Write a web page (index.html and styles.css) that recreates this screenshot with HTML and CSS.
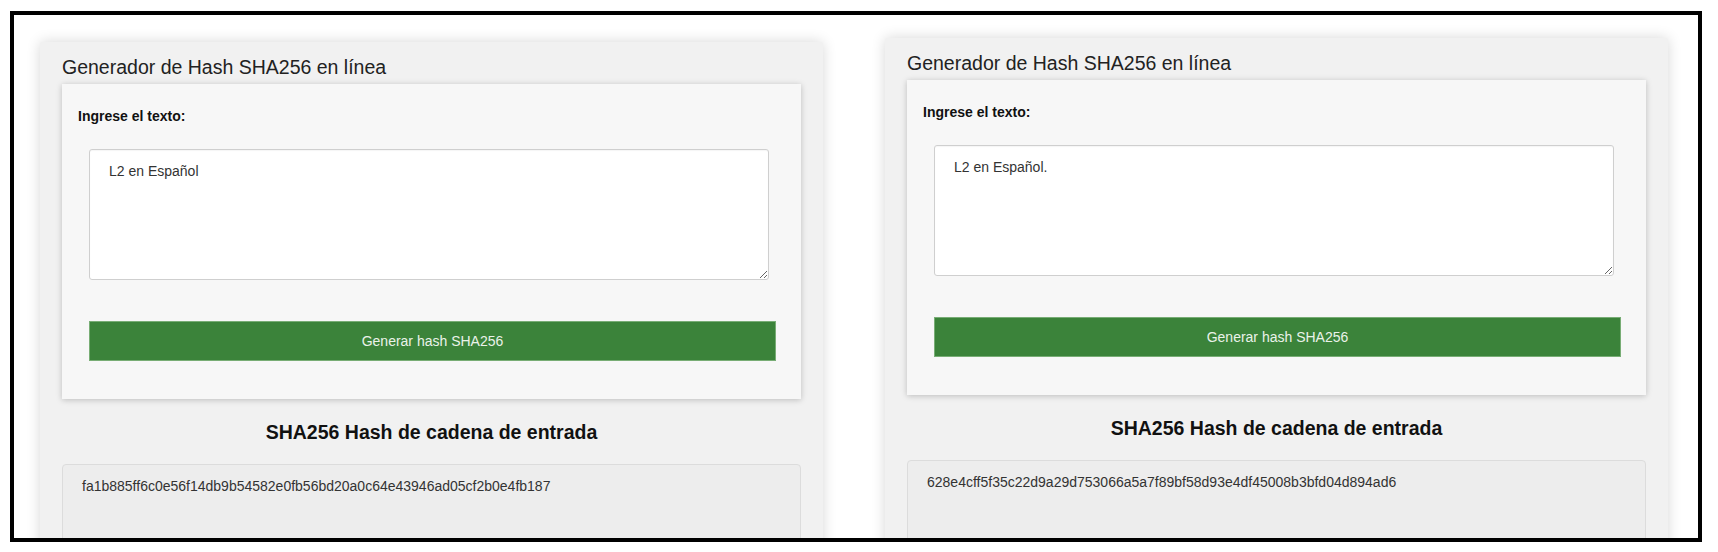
FILE: index.html
```html
<!DOCTYPE html>
<html lang="es">
<head>
<meta charset="utf-8">
<title>Generador de Hash SHA256 en línea</title>
<link rel="stylesheet" href="styles.css">
</head>
<body>
<div class="frame">
  <div class="columns">
    <section class="card card-left">
      <h2 class="title">Generador de Hash SHA256 en línea</h2>
      <div class="form-card">
        <label class="label">Ingrese el texto:</label>
        <textarea class="input">L2 en Español</textarea>
        <button class="btn">Generar hash SHA256</button>
      </div>
      <h3 class="result-title">SHA256 Hash de cadena de entrada</h3>
      <div class="result">fa1b885ff6c0e56f14db9b54582e0fb56bd20a0c64e43946ad05cf2b0e4fb187</div>
    </section>
    <section class="card card-right">
      <h2 class="title">Generador de Hash SHA256 en línea</h2>
      <div class="form-card">
        <label class="label">Ingrese el texto:</label>
        <textarea class="input">L2 en Español.</textarea>
        <button class="btn">Generar hash SHA256</button>
      </div>
      <h3 class="result-title">SHA256 Hash de cadena de entrada</h3>
      <div class="result">628e4cff5f35c22d9a29d753066a5a7f89bf58d93e4df45008b3bfd04d894ad6</div>
    </section>
  </div>
</div>
</body>
</html>
```

FILE: styles.css
```css
html, body {
  margin: 0;
  padding: 0;
  background: #ffffff;
}
body {
  font-family: "Liberation Sans", Arial, sans-serif;
}
.frame {
  box-sizing: border-box;
  width: 1692px;
  height: 531px;
  margin: 11px 0 0 10px;
  border: 4px solid #000;
  background: #fff;
  overflow: hidden;
}
.columns {
  display: flex;
  align-items: flex-start;
  padding-left: 26px;
  gap: 62px;
}
.card {
  box-sizing: border-box;
  width: 783px;
  background: #f1f1f1;
  padding: 14px 22px 0 22px;
  box-shadow: 0 0 14px rgba(0, 0, 0, 0.16);
  border-radius: 2px;
}
.card-left { margin-top: 27px; }
.card-right { margin-top: 23px; }
.title {
  margin: 0 0 5px 0;
  font-size: 19.5px;
  font-weight: normal;
  color: #222;
  line-height: normal;
}
.form-card {
  background: #f7f7f7;
  padding: 24px 16px 38px 16px;
  box-shadow: 0 1px 6px rgba(0, 0, 0, 0.22);
  display: flex;
  flex-direction: column;
  align-items: flex-start;
}
.label {
  font-size: 14px;
  font-weight: bold;
  color: #111;
  line-height: normal;
}
.input {
  box-sizing: border-box;
  margin: 25px 0 0 11px;
  width: 680px;
  height: 131px;
  padding: 13px 19px;
  border: 1px solid #cfcfcf;
  border-radius: 3px;
  background: #fff;
  font-family: "Liberation Sans", Arial, sans-serif;
  font-size: 14px;
  color: #333;
  line-height: normal;
  box-shadow: inset 0 1px 1px rgba(0,0,0,0.04);
}
.btn {
  box-sizing: border-box;
  margin: 41px 0 0 11px;
  width: 687px;
  height: 40px;
  border: 1px solid #78ad75;
  background: #3b833a;
  color: #eaf2e9;
  font-family: "Liberation Sans", Arial, sans-serif;
  font-size: 14px;
  cursor: pointer;
}
.result-title {
  margin: 22px 0 20px 0;
  text-align: center;
  font-size: 19.5px;
  font-weight: bold;
  color: #111;
  line-height: normal;
}
.result {
  min-height: 140px;
  background: #ededed;
  border: 1px solid #dcdcdc;
  border-radius: 4px;
  padding: 13px 19px;
  font-size: 14px;
  color: #333;
  line-height: normal;
}
```
